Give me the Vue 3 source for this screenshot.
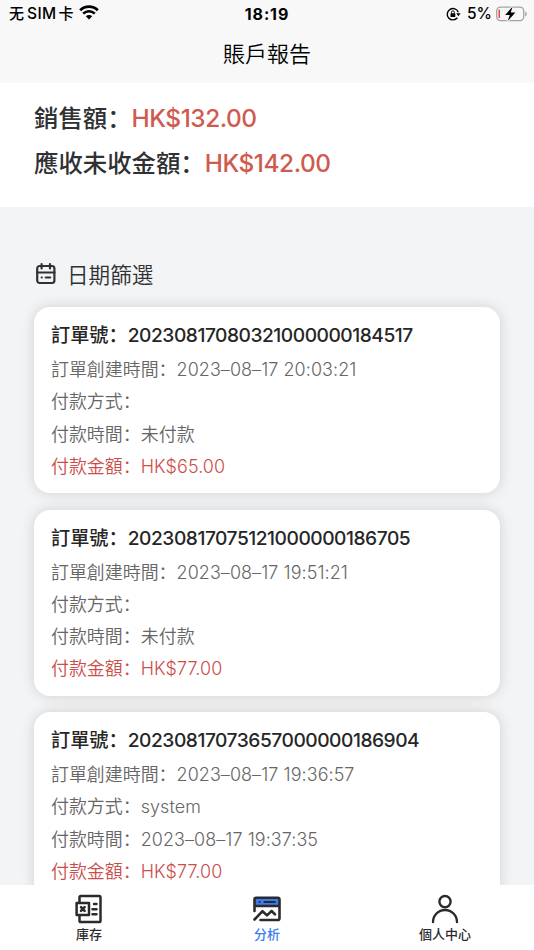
<template>
  <div class="page">
    <header class="top">
      <div class="status">
        <div class="carrier">
          <span>无</span><span class="sim">SIM</span><span>卡</span>
          <svg class="wifi" width="20" height="15" viewBox="0 0 20 15">
            <path d="M1.2 5.2C6.1.3 13.9.3 18.8 5.2" fill="none" stroke="#000" stroke-width="2.8" />
            <path d="M4.2 8.6c3.3-3.2 8.3-3.2 11.6 0" fill="none" stroke="#000" stroke-width="2.6" />
            <path d="M6.8 11.2c1.8-1.7 4.6-1.7 6.4 0L10 14.5z" />
          </svg>
        </div>
        <div class="clock">18:19</div>
        <div class="power">
          <svg class="lock" width="15" height="14" viewBox="0 0 15 14" fill="none" stroke="#000">
            <path d="M11.4 10.8A5.7 5.7 0 1 1 12.3 5.2" stroke-width="1.4" />
            <path d="M10.2 6.2h4.4l-2.2 3z" fill="#000" stroke="none" />
            <rect x="4.5" y="6.2" width="4.8" height="3.8" rx=".6" fill="#000" stroke="none" />
            <path d="M5.5 6.5V5.2a1.4 1.4 0 0 1 2.8 0v1.3" stroke-width=".9" />
          </svg>
          <span class="percent">5%</span>
          <svg class="battery" width="32" height="16" viewBox="0 0 32 16">
            <rect x=".7" y="1.2" width="27" height="13.4" rx="3.8" fill="none" stroke="#a3a3a3" stroke-width="1.3" />
            <path d="M29.2 5.5c2.2.7 2.2 4.2 0 4.9z" fill="#a3a3a3" />
            <rect x="2.5" y="3.6" width="1.5" height="8.6" rx=".7" fill="#e8483e" />
            <path d="M16.7.6 9.2 8.9h4.6l-2.2 6.2 7.8-8.5h-4.7z" stroke="#f8f8f8" stroke-width="2" paint-order="stroke" />
          </svg>
        </div>
      </div>
      <h1>賬戶報告</h1>
    </header>

    <section class="summary">
      <div v-for="s in summary" :key="s.label" class="sum-row">
        <span>{{ s.label }}：</span><span class="money">{{ s.value }}</span>
      </div>
    </section>

    <main class="list">
      <div class="filter">
        <svg width="20" height="22" viewBox="0 0 20 22" fill="none" stroke="#303133" stroke-width="2.2" stroke-linecap="round">
          <rect x="1.2" y="3" width="17.2" height="17" rx="2.4" />
          <path d="M1.2 9.5h17.2M5.6 1.2v4.2M14 1.2v4.2M9.8 14.5h4.4M5.7 14.5h.1" />
        </svg>
        <span>日期篩選</span>
      </div>

      <div v-for="o in orders" :key="o.no" class="card">
        <div class="title"><span>訂單號：</span><span class="no">{{ o.no }}</span></div>
        <div class="row"><span>訂單創建時間：</span><span class="val">{{ o.created }}</span></div>
        <div class="row"><span>付款方式：</span><span class="val">{{ o.method }}</span></div>
        <div class="row"><span>付款時間：</span><span class="val">{{ o.paid }}</span></div>
        <div class="row red"><span>付款金額：</span><span class="val">{{ o.amount }}</span></div>
      </div>
    </main>

    <nav class="tabbar">
      <div class="tab">
        <svg width="28" height="30" viewBox="0 0 28 30" fill="none" stroke="#2b2b2d" stroke-width="2.5" stroke-linejoin="round" stroke-linecap="round">
          <path d="M4.5 8V3.3Q4.5 2 5.8 2h18.4q1.3 0 1.3 1.3v23.4q0 1.3-1.3 1.3H5.8q-1.3 0-1.3-1.3V22" />
          <rect x="1.6" y="9" width="12.4" height="12" />
          <path d="m6 13.2 3.6 3.6m0-3.6L6 16.8" stroke-width="2.6" />
          <path d="M19 10h2.5M17.5 15.2h4M17.5 20.2h4" />
        </svg>
        <span>庫存</span>
      </div>
      <div class="tab active">
        <svg width="30" height="30" viewBox="0 0 30 30" fill="none" stroke="#2b2b2d" stroke-width="2.6" stroke-linejoin="round" stroke-linecap="round">
          <path d="M2.5 4.2h25v7.4h-25z" fill="#3b7cf0" stroke="none" />
          <path d="M2.5 17V5.6q0-1.8 1.8-1.8h21.4q1.8 0 1.8 1.8v18.6q0 1.8-1.8 1.8H8.5M2.5 12h25" />
          <path d="M7.5 8h.1M12.4 8h10.4" stroke-width="2" />
          <path d="m2.5 25.5 8-8.3 4.5 4.2 4.6-4.4 3.4 3.4" />
        </svg>
        <span>分析</span>
      </div>
      <div class="tab">
        <svg width="30" height="30" viewBox="0 0 30 30" fill="none" stroke="#2b2b2d" stroke-width="2.4" stroke-linecap="round">
          <circle cx="15" cy="7.6" r="5.6" />
          <path d="M3 28a12 12 0 0 1 24 0" />
        </svg>
        <span>個人中心</span>
      </div>
    </nav>
  </div>
</template>

<script setup>
const summary = [
  { label: '銷售額', value: 'HK$132.00' },
  { label: '應收未收金額', value: 'HK$142.00' },
]

const orders = [
  { no: '20230817080321000000184517', created: '2023–08–17 20:03:21', method: '', paid: '未付款', amount: 'HK$65.00' },
  { no: '20230817075121000000186705', created: '2023–08–17 19:51:21', method: '', paid: '未付款', amount: 'HK$77.00' },
  { no: '20230817073657000000186904', created: '2023–08–17 19:36:57', method: 'system', paid: '2023–08–17 19:37:35', amount: 'HK$77.00' },
]
</script>

<style>
body { margin: 0; overflow: hidden; }
</style>

<style scoped>
.page { height: 950px; display: flex; flex-direction: column; overflow: hidden; background: #f3f4f6; color: #303133; font-family: Inter, "Noto Sans CJK SC", sans-serif; white-space: nowrap; }
.top { flex: none; height: 83px; background: #f8f8f8; color: #000; }
.status { height: 27px; display: grid; grid-template-columns: 1fr auto 1fr; align-items: center; font-size: 15px; font-weight: 500; }
.carrier { display: flex; align-items: center; height: 27px; line-height: 27px; padding-left: 9px; }
.sim { margin: 0 2px 0 3px; font-size: 15.5px; letter-spacing: 0.4px; }
.wifi { margin: -2px 0 0 5px; }
.clock { font-weight: 700; font-size: 16px; letter-spacing: 0.9px; }
.power { display: flex; align-items: center; justify-content: flex-end; padding-right: 6px; }
.percent { margin: 0 4px 0 6px; font-size: 15.5px; }
h1 { margin: 0; height: 54px; line-height: 54px; text-align: center; font-size: 22px; font-weight: 350; }
.summary { flex: none; height: 89px; padding: 13px 34px 22px; background: #fff; }
.sum-row { display: flex; height: 45px; line-height: 45px; font-size: 24.4px; font-weight: 500; }
.money { color: #cf5b50; letter-spacing: -0.45px; }
.list { flex: 1; min-height: 0; overflow: hidden; padding: 45px 34px 0; }
.filter { display: flex; align-items: center; gap: 11px; height: 43px; padding: 0 0 12px 2px; font-size: 21.6px; font-weight: 350; }
.card { box-sizing: border-box; height: 186px; margin-bottom: 16.6px; padding: 11px 17px; border-radius: 16px; background: #fff; box-shadow: 0 0 14px rgba(0, 0, 0, 0.15); }
.title { display: flex; height: 36px; line-height: 35px; font-size: 19.2px; font-weight: 500; color: #262626; }
.no { letter-spacing: -0.48px; }
.row { display: flex; height: 32.3px; line-height: 32.3px; font-size: 17.95px; font-weight: 350; color: #666; }
.val { letter-spacing: 0.08px; }
.row.red { color: #cb4d49; }
.tabbar { flex: none; height: 65px; display: grid; grid-template-columns: repeat(3, 1fr); background: #fff; }
.tab { display: flex; flex-direction: column; align-items: center; padding-top: 9px; font-size: 13px; font-weight: 500; line-height: 20px; color: #2b2b2d; }
.tab.active { color: #3b7cf0; }
</style>
